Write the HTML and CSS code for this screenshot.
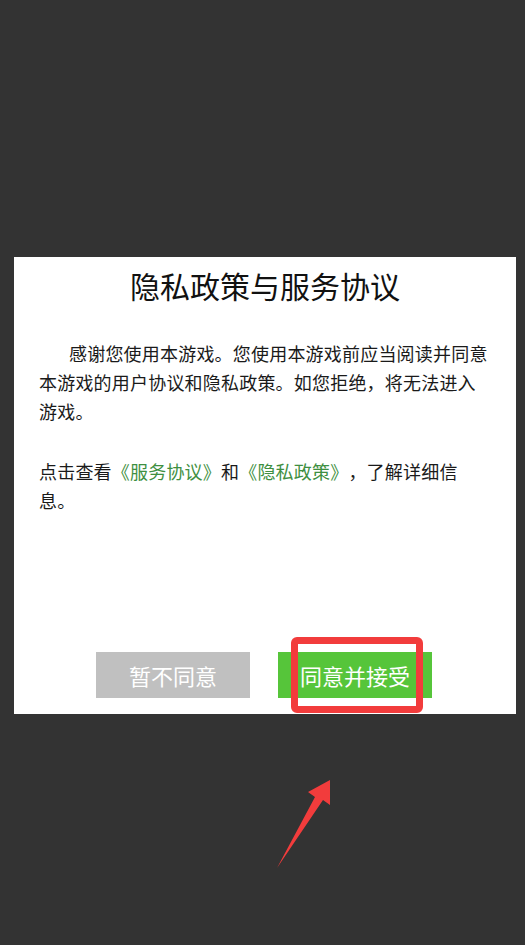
FILE: index.html
```html
<!DOCTYPE html>
<html lang="zh-CN">
<head>
<meta charset="utf-8">
<link rel="stylesheet" href="styles.css">
</head>
<body>
<div class="card">
  <h1 class="title">隐私政策与服务协议</h1>
  <div class="content">
    <p class="para indent">感谢您使用本游戏。您使用本游戏前应当阅读并同意本游戏的用户协议和隐私政策。如您拒绝，将无法进入游戏。</p>
    <p class="para gap">点击查看<span class="link">《服务协议》</span>和<span class="link">《隐私政策》</span>，了解详细信息。</p>
  </div>
  <div class="actions">
    <button class="btn btn-gray">暂不同意</button>
    <button class="btn btn-green">同意并接受</button>
  </div>
  <div class="highlight"></div>
</div>
<svg class="arrow" width="525" height="945" viewBox="0 0 525 945">
  <polygon points="330,780 308,792 315,797 277,868 323,800 330,805" fill="#f23c3c"/>
</svg>
</body>
</html>
```
FILE: styles.css
```css
html, body {
  margin: 0;
  padding: 0;
}
body {
  background: #333333;
  width: 525px;
  height: 945px;
  position: relative;
  overflow: hidden;
  font-family: "Noto Sans CJK SC", "Noto Sans", sans-serif;
  text-spacing-trim: space-all;
}
.card {
  position: relative;
  margin: 257px 0 0 14px;
  width: 502px;
  height: 457px;
  background: #ffffff;
  display: flex;
  flex-direction: column;
  box-sizing: border-box;
}
.title {
  margin: 9px 0 0;
  font-size: 30px;
  line-height: 39px;
  font-weight: normal;
  color: #111111;
  text-align: center;
}
.content {
  margin-top: 34px;
  padding: 0 25px;
}
.para {
  margin: 0;
  font-size: 18px;
  line-height: 29px;
  letter-spacing: 0.2px;
  color: #1a1a1a;
  width: 452px;
  text-spacing-trim: space-all;
}
.indent {
  text-indent: 30px;
}
.gap {
  margin-top: 31px;
}
.link {
  color: #3e8f41;
}
.actions {
  margin-top: auto;
  padding-bottom: 16px;
  display: flex;
  justify-content: center;
  gap: 28px;
  padding-right: 2px;
}
.btn {
  width: 154px;
  height: 46px;
  border: none;
  padding: 0;
  font-family: "Noto Sans CJK SC", "Noto Sans", sans-serif;
  font-size: 22px;
  color: #ffffff;
}
.btn-gray {
  background: #c0c0c0;
}
.btn-green {
  background: #56c53a;
}
.highlight {
  position: absolute;
  left: 277px;
  top: 380px;
  width: 132px;
  height: 76px;
  box-sizing: border-box;
  border: 7px solid #f23c3c;
  border-radius: 6px;
}
.arrow {
  position: absolute;
  left: 0;
  top: 0;
}
```
